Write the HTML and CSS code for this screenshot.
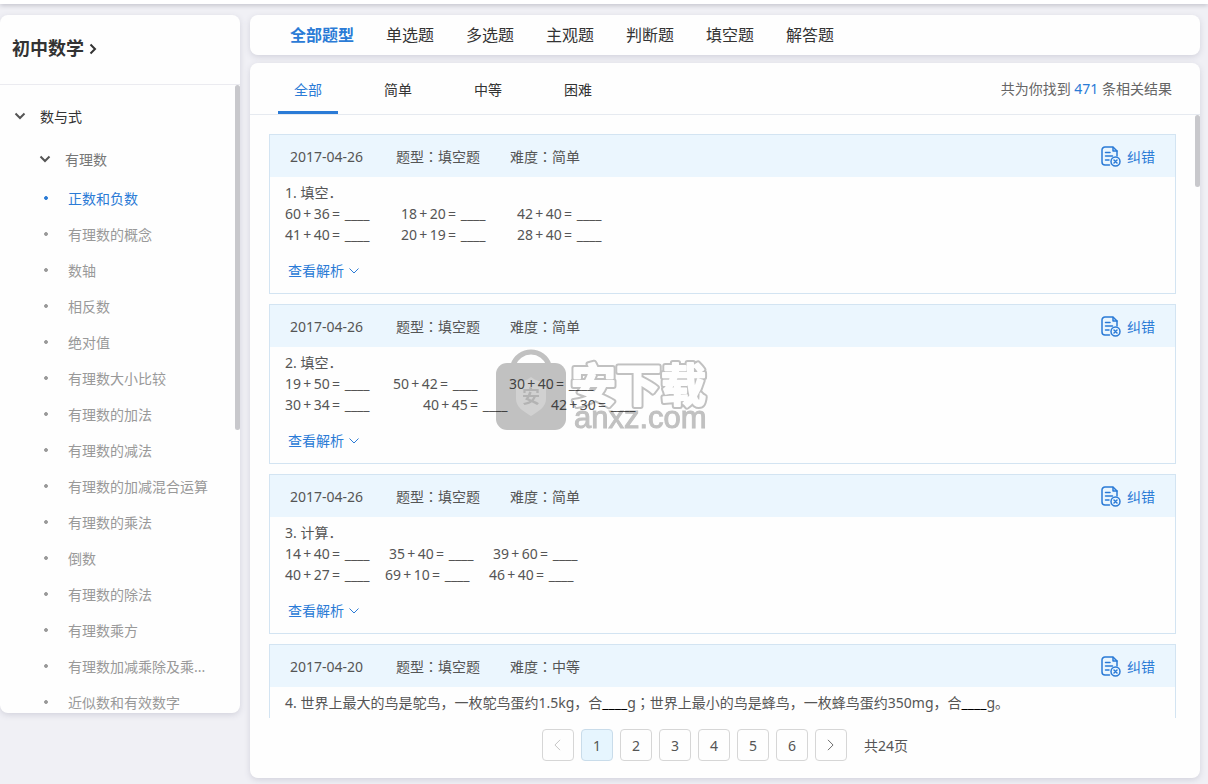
FILE: index.html
```html
<!DOCTYPE html>
<html lang="zh-CN">
<head>
<meta charset="utf-8">
<title>初中数学</title>
<link rel="stylesheet" href="styles.css">
</head>
<body>
<svg class="defs" aria-hidden="true">
  <symbol id="down" viewBox="0 0 12 8"><path d="M1.500 1.500 6 6l4.500-4.500" fill="none" stroke="currentColor"/></symbol>
  <symbol id="report" viewBox="0 0 20 21">
    <g fill="none" stroke="currentColor" stroke-width="1.500" stroke-linecap="round" stroke-linejoin="round">
      <path d="M8.500 19H4a3 3 0 0 1-3-3V4a3 3 0 0 1 3-3h8l4 4v5"/>
      <path d="M12 1.500V5h4M4.500 6.500h4.500M4.500 10h7M4.500 14h3.500"/>
      <circle cx="14.500" cy="15.500" r="4.500"/>
      <path d="m13 14 3 3m0-3-3 3"/>
    </g>
  </symbol>
</svg>
<header class="topbar"></header>
<div class="layout">
  <aside class="sidebar">
    <h1 class="subject"><a href="#">初中数学<svg class="subject-arrow" viewBox="0 0 8 12"><path d="m1.500 1.500 4.500 4.500-4.500 4.500" fill="none" stroke="currentColor" stroke-width="2"/></svg></a></h1>
    <nav class="tree">
      <button class="node node-root"><svg class="fold"><use href="#down"/></svg>数与式</button>
      <button class="node node-sub"><svg class="fold"><use href="#down"/></svg>有理数</button>
      <ul class="leaves">
        <li><a class="leaf current" href="#">正数和负数</a></li>
        <li><a class="leaf" href="#">有理数的概念</a></li>
        <li><a class="leaf" href="#">数轴</a></li>
        <li><a class="leaf" href="#">相反数</a></li>
        <li><a class="leaf" href="#">绝对值</a></li>
        <li><a class="leaf" href="#">有理数大小比较</a></li>
        <li><a class="leaf" href="#">有理数的加法</a></li>
        <li><a class="leaf" href="#">有理数的减法</a></li>
        <li><a class="leaf" href="#">有理数的加减混合运算</a></li>
        <li><a class="leaf" href="#">有理数的乘法</a></li>
        <li><a class="leaf" href="#">倒数</a></li>
        <li><a class="leaf" href="#">有理数的除法</a></li>
        <li><a class="leaf" href="#">有理数乘方</a></li>
        <li><a class="leaf" href="#">有理数加减乘除及乘...</a></li>
        <li><a class="leaf" href="#">近似数和有效数字</a></li>
      </ul>
      <span class="thumb thumb-tree"></span>
    </nav>
  </aside>
  <main class="content">
    <nav class="types">
      <a class="type current" href="#">全部题型</a>
      <a class="type" href="#">单选题</a>
      <a class="type" href="#">多选题</a>
      <a class="type" href="#">主观题</a>
      <a class="type" href="#">判断题</a>
      <a class="type" href="#">填空题</a>
      <a class="type" href="#">解答题</a>
    </nav>
    <section class="panel">
      <div class="filter">
        <div class="levels">
          <button class="level current">全部</button>
          <button class="level">简单</button>
          <button class="level">中等</button>
          <button class="level">困难</button>
        </div>
        <p class="count">共为你找到 <b>471</b> 条相关结果</p>
      </div>
      <div class="results">
        <div class="list">
          <article class="card">
            <header class="card-head"><time class="date">2017-04-26</time><span>题型<span class="mid" lang="zh-TW">：</span>填空题</span><span>难度<span class="mid" lang="zh-TW">：</span>简单</span><button class="report"><svg class="report-icon"><use href="#report"/></svg>纠错</button></header>
            <div class="card-body">
              <p>1. 填空．</p>
              <p class="row"><span class="eq">60&thinsp;+&thinsp;36&thinsp;=&emsp13;____</span><span class="eq gap-xl">18&thinsp;+&thinsp;20&thinsp;=&emsp13;____</span><span class="eq gap-xl">42&thinsp;+&thinsp;40&thinsp;=&emsp13;____</span></p>
              <p class="row"><span class="eq">41&thinsp;+&thinsp;40&thinsp;=&emsp13;____</span><span class="eq gap-xl">20&thinsp;+&thinsp;19&thinsp;=&emsp13;____</span><span class="eq gap-xl">28&thinsp;+&thinsp;40&thinsp;=&emsp13;____</span></p>
              <button class="explain">查看解析<svg class="explain-arrow"><use href="#down"/></svg></button>
            </div>
          </article>
          <article class="card">
            <header class="card-head"><time class="date">2017-04-26</time><span>题型<span class="mid" lang="zh-TW">：</span>填空题</span><span>难度<span class="mid" lang="zh-TW">：</span>简单</span><button class="report"><svg class="report-icon"><use href="#report"/></svg>纠错</button></header>
            <div class="card-body">
              <p>2. 填空．</p>
              <p class="row"><span class="eq">19&thinsp;+&thinsp;50&thinsp;=&emsp13;____</span><span class="eq gap-l">50&thinsp;+&thinsp;42&thinsp;=&emsp13;____</span><span class="eq gap-xl">30&thinsp;+&thinsp;40&thinsp;=&emsp13;____</span></p>
              <p class="row"><span class="eq">30&thinsp;+&thinsp;34&thinsp;=&emsp13;____</span><span class="eq gap-3xl">40&thinsp;+&thinsp;45&thinsp;=&emsp13;____</span><span class="eq gap-2xl">42&thinsp;+&thinsp;30&thinsp;=&emsp13;____</span></p>
              <button class="explain">查看解析<svg class="explain-arrow"><use href="#down"/></svg></button>
            </div>
          </article>
          <article class="card">
            <header class="card-head"><time class="date">2017-04-26</time><span>题型<span class="mid" lang="zh-TW">：</span>填空题</span><span>难度<span class="mid" lang="zh-TW">：</span>简单</span><button class="report"><svg class="report-icon"><use href="#report"/></svg>纠错</button></header>
            <div class="card-body">
              <p>3. 计算．</p>
              <p class="row"><span class="eq">14&thinsp;+&thinsp;40&thinsp;=&emsp13;____</span><span class="eq gap-m">35&thinsp;+&thinsp;40&thinsp;=&emsp13;____</span><span class="eq gap-m">39&thinsp;+&thinsp;60&thinsp;=&emsp13;____</span></p>
              <p class="row"><span class="eq">40&thinsp;+&thinsp;27&thinsp;=&emsp13;____</span><span class="eq gap-s">69&thinsp;+&thinsp;10&thinsp;=&emsp13;____</span><span class="eq gap-m">46&thinsp;+&thinsp;40&thinsp;=&emsp13;____</span></p>
              <button class="explain">查看解析<svg class="explain-arrow"><use href="#down"/></svg></button>
            </div>
          </article>
          <article class="card">
            <header class="card-head"><time class="date">2017-04-20</time><span>题型<span class="mid" lang="zh-TW">：</span>填空题</span><span>难度<span class="mid" lang="zh-TW">：</span>中等</span><button class="report"><svg class="report-icon"><use href="#report"/></svg>纠错</button></header>
            <div class="card-body">
              <p>4. 世界上最大的鸟是鸵鸟，一枚鸵鸟蛋约1.5kg，合<span class="blank">____</span>g<span class="mid" lang="zh-TW">；</span>世界上最小的鸟是蜂鸟，一枚蜂鸟蛋约350mg，合<span class="blank">____</span>g。</p>
            </div>
          </article>
        </div>
        <span class="thumb thumb-list"></span>
      </div>
      <nav class="pager">
        <button class="page" disabled aria-label="上一页"><svg class="page-arrow" viewBox="0 0 8 14"><path d="M7 1 1 7l6 6" fill="none" stroke="currentColor"/></svg></button>
        <button class="page current">1</button>
        <button class="page">2</button>
        <button class="page">3</button>
        <button class="page">4</button>
        <button class="page">5</button>
        <button class="page">6</button>
        <button class="page" aria-label="下一页"><svg class="page-arrow" viewBox="0 0 8 14"><path d="m1 1 6 6-6 6" fill="none" stroke="currentColor"/></svg></button>
        <span class="total">共24页</span>
      </nav>
    </section>
  </main>
</div>
<svg class="watermark" viewBox="0 0 216 84" aria-hidden="true">
  <path d="M19 17a19 19 0 0 1 36 0" fill="none" stroke="#c2c2c2" stroke-width="5"/>
  <rect x="2" y="15" width="70" height="67" rx="11" fill="#c2c2c2"/>
  <path d="M37 29c5 4 10 5 15 5v17c0 8-7 12-15 17-8-5-15-9-15-17V34c5 0 10-1 15-5z" fill="#d2d2d2"/>
  <text class="wm-badge" x="37" y="55" text-anchor="middle">安</text>
  <text class="wm-name wm-outer" x="77" y="54">安下载</text>
  <text class="wm-name wm-inner" x="77" y="54">安下载</text>
  <text class="wm-site" x="80" y="80">anxz.com</text>
</svg>
</body>
</html>
```
FILE: styles.css
```css
*, *::before { box-sizing: border-box; }

body {
  margin: 0;
  height: 100vh;
  display: flex;
  flex-direction: column;
  background: #f0f0f5;
  color: #555;
  font: 14px/21px "Noto Sans", "Noto Sans CJK SC", sans-serif;
  overflow: hidden;
}

h1, p, ul { margin: 0; padding: 0; }
ul { list-style: none; }
a { color: inherit; text-decoration: none; }
button {
  padding: 0;
  border: 0;
  background: none;
  color: inherit;
  font: inherit;
  cursor: pointer;
}

/* Full-width colons centred in their cell */
.mid { font-family: "Noto Sans CJK TC", sans-serif; line-height: 1; }

.defs { position: absolute; width: 0; height: 0; }

.topbar {
  flex: none;
  height: 4px;
  background: #fff;
  box-shadow: 0 1px 5px #b4b4be;
}

.layout {
  flex: 1;
  min-height: 0;
  display: flex;
  gap: 10px;
  padding: 11px 8px 6px 0;
}

.sidebar, .types, .panel {
  background: #fefefe;
  border-radius: 8px;
  box-shadow: 0 2px 6px #d2d2dc;
}

.sidebar {
  flex: none;
  width: 240px;
  margin-bottom: 65px;
  display: flex;
  flex-direction: column;
  overflow: hidden;
}

.subject {
  flex: none;
  height: 70px;
  padding: 0 12px 2px;
  display: flex;
  align-items: center;
  border-bottom: 1px solid #ebebf0;
  color: #333;
  font-size: 18px;
}
.subject-arrow { width: 8px; height: 12px; margin-left: 5px; }

.tree {
  position: relative;
  flex: 1;
  min-height: 0;
  padding-top: 9px;
  overflow: hidden;
}
.node {
  display: flex;
  align-items: center;
  gap: 14px;
  width: 100%;
}
.node-root { height: 44px; padding-left: 14px; color: #333; }
.node-sub { height: 42px; padding-left: 39px; color: #777; }
.fold { width: 12px; height: 8px; color: #555; stroke-width: 2; }

.leaf {
  display: flex;
  align-items: center;
  gap: 20px;
  height: 36px;
  padding-left: 44px;
  color: #999;
}
.leaf::before {
  content: "";
  width: 4px;
  height: 4px;
  border: 1px solid currentColor;
  border-radius: 50%;
  background: currentColor;
}
.leaf.current, .type.current, .level.current { color: #2b7bd6; }

.thumb {
  position: absolute;
  top: 0;
  right: 0;
  width: 5px;
  border-radius: 3px;
  background: #c8c8cc;
}
.thumb-tree { height: 55%; }
.thumb-list { height: 12%; }

.content {
  flex: 1;
  min-width: 0;
  display: flex;
  flex-direction: column;
  gap: 8px;
}

.types {
  flex: none;
  height: 40px;
  padding-left: 40px;
  display: flex;
  align-items: center;
  gap: 32px;
  color: #333;
  font-size: 16px;
}
.type.current { font-weight: bold; }

.panel {
  flex: 1;
  min-height: 0;
  display: flex;
  flex-direction: column;
}

.filter {
  flex: none;
  height: 52px;
  padding: 0 28px;
  display: flex;
  justify-content: space-between;
  border-bottom: 1px solid #e6eaf0;
}
.levels { display: flex; gap: 30px; color: #333; }
.level { width: 60px; border-top: 4px solid transparent; border-bottom: 3px solid transparent; }
.level.current { border-bottom-color: #2b7bd6; }
.count { line-height: 52px; color: #666; }
.count b { color: #2b7bd6; font-weight: normal; }

.results { position: relative; flex: 1; min-height: 0; }
.list {
  height: 100%;
  padding: 19px 24px 0 19px;
  display: flex;
  flex-direction: column;
  gap: 10px;
  overflow: hidden;
}

.card { flex: none; border: 1px solid #d3e4f2; }
.card:last-child { flex: 1; border-bottom: 0; }
.card-head {
  height: 42px;
  padding: 0 20px;
  display: flex;
  align-items: center;
  gap: 30px;
  background: #ebf6fe;
}
.date { min-width: 76px; }
.report {
  margin-left: auto;
  display: flex;
  align-items: center;
  gap: 6px;
  color: #2b7bd6;
}
.report-icon { width: 20px; height: 21px; }

.card-body { padding: 5px 15px 12px; }
.row { display: flex; }
.eq { width: 84px; white-space: nowrap; }
.gap-s { margin-left: 16px; }
.gap-m { margin-left: 20px; }
.gap-l { margin-left: 24px; }
.gap-xl { margin-left: 32px; }
.gap-2xl { margin-left: 44px; }
.gap-3xl { margin-left: 54px; }
.blank { color: #000; }

.explain {
  margin: 15px 0 0 3px;
  display: flex;
  align-items: center;
  gap: 4px;
  color: #2b7bd6;
}
.explain-arrow { width: 12px; height: 8px; }

.pager {
  flex: none;
  display: flex;
  justify-content: center;
  align-items: center;
  gap: 7px;
  padding: 11px 0 17px;
}
.page {
  width: 32px;
  height: 32px;
  display: flex;
  align-items: center;
  justify-content: center;
  border: 1px solid #d6d6d6;
  border-radius: 4px;
}
.page.current { background: #e6f5fe; border-color: #c9dcea; }
.page:disabled { color: #bbb; }
.page-arrow { width: 7px; height: 12px; }
.total { margin-left: 10px; }

.watermark {
  position: fixed;
  top: 50%;
  left: 50%;
  width: 216px;
  height: 84px;
  margin: -44px 0 0 -110px;
  mix-blend-mode: multiply;
  pointer-events: none;
}
.wm-badge { font-size: 18px; font-weight: bold; fill: #b4b4b4; }
.wm-name { font-size: 45px; font-weight: bold; stroke-linejoin: round; }
.wm-outer { fill: #c2c2c2; stroke: #c2c2c2; stroke-width: 6px; }
.wm-inner { fill: #fff; stroke: #fff; stroke-width: 2px; }
.wm-site {
  font-family: "Liberation Sans", sans-serif;
  font-size: 31px;
  fill: #c2c2c2;
  stroke: #c2c2c2;
  stroke-width: 1px;
}
```
